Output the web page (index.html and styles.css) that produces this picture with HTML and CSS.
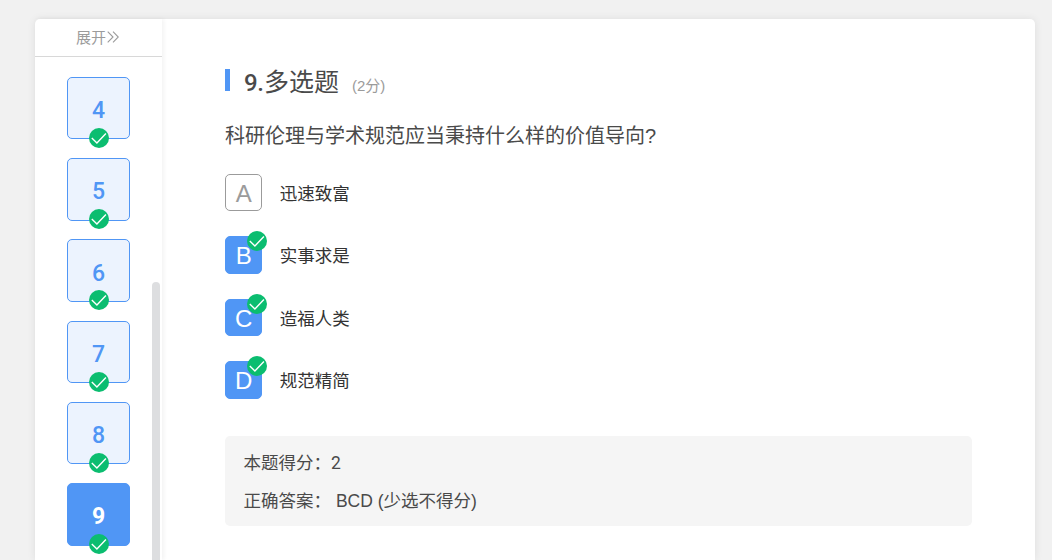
FILE: index.html
```html
<!DOCTYPE html>
<html lang="zh-CN">
  <head>
    <meta charset="UTF-8" />
    <meta name="viewport" content="width=device-width, initial-scale=1.0" />
    <title>多选题</title>
    <link rel="stylesheet" href="styles.css">
  </head>
  <body>
    <!-- Shared icons -->
    <svg class="icon-defs" width="0" height="0">
      <symbol id="check" viewBox="0 0 20 20">
        <circle cx="10" cy="10" r="10" fill="#0bbd70" />
        <path d="M2.8 10 7.9 15 16.9 5.4" fill="none" stroke="#fff" stroke-width="1.4" />
      </symbol>
    </svg>

    <div class="card">
      <aside class="sidebar">
        <div class="expand">
          <span>展开</span>
          <svg class="arrows" viewBox="0 0 12 12">
            <path d="M.7.7 6 6 .7 11.3M6 .7 11.3 6 6 11.3" />
          </svg>
        </div>
        <nav class="numbers">
          <div class="number">4<svg class="check"><use href="#check" /></svg></div>
          <div class="number">5<svg class="check"><use href="#check" /></svg></div>
          <div class="number">6<svg class="check"><use href="#check" /></svg></div>
          <div class="number">7<svg class="check"><use href="#check" /></svg></div>
          <div class="number">8<svg class="check"><use href="#check" /></svg></div>
          <div class="number active">9<svg class="check"><use href="#check" /></svg></div>
        </nav>
        <div class="scrollbar"></div>
      </aside>

      <main class="question">
        <div class="title">
          <span class="bar"></span>
          <h1><span class="din">9.</span>多选题</h1>
          <span class="score">(2分)</span>
        </div>
        <p class="stem">科研伦理与学术规范应当秉持什么样的价值导向?</p>

        <div class="options">
          <div class="option">
            <span class="letter">A</span>
            <span>迅速致富</span>
          </div>
          <div class="option selected">
            <span class="letter">B<svg class="check"><use href="#check" /></svg></span>
            <span>实事求是</span>
          </div>
          <div class="option selected">
            <span class="letter">C<svg class="check"><use href="#check" /></svg></span>
            <span>造福人类</span>
          </div>
          <div class="option selected">
            <span class="letter">D<svg class="check"><use href="#check" /></svg></span>
            <span>规范精简</span>
          </div>
        </div>

        <div class="result">
          <div>本题得分：<span class="points">2</span></div>
          <div>正确答案： <span class="answer">BCD (少选不得分)</span></div>
        </div>
      </main>
    </div>
  </body>
</html>
```
FILE: styles.css
```css
* {
  box-sizing: border-box;
}

body {
  margin: 0;
  height: 560px;
  padding: 19px 17px 0 35px;
  overflow: hidden;
  background: #f1f1f1;
  color: #4a4a4a;
  font-family: "Liberation Sans", "Noto Sans CJK SC", sans-serif;
}

.icon-defs {
  display: none;
}

.card {
  display: flex;
  height: 541px;
  background: #fff;
  border-radius: 5px 5px 0 0;
  box-shadow: 0 0 8px rgba(0, 0, 0, 0.08);
}

.sidebar {
  position: relative;
  flex: none;
  width: 127px;
  box-shadow: 2px 0 4px rgba(0, 0, 0, 0.05);
}

.expand {
  display: flex;
  align-items: center;
  justify-content: center;
  gap: 1px;
  height: 38px;
  padding: 0 2px 2px 0;
  border-bottom: 1px solid #d8d8d8;
  color: #9b9b9b;
  font-size: 15px;
}

.arrows {
  width: 12px;
  height: 12px;
  fill: none;
  stroke: #9b9b9b;
  stroke-width: 1.1;
}

.numbers {
  display: flex;
  flex-direction: column;
  gap: 18.75px;
  padding: 19.9px 32px 0;
}

.number {
  position: relative;
  display: flex;
  align-items: center;
  justify-content: center;
  flex: none;
  height: 62.5px;
  padding-top: 5px;
  background: #ecf3fe;
  border: 1px solid #5096f5;
  border-radius: 5px;
  color: #5096f5;
  font: 500 23px Roboto, sans-serif;
}

.number.active {
  background: #5096f5;
  color: #fff;
  font-weight: 700;
}

.check {
  position: absolute;
  width: 20px;
  height: 20px;
}

.number .check {
  left: 21px;
  bottom: -9.5px;
}

/* thumb of the number list */
.scrollbar {
  position: absolute;
  top: 263px;
  right: 2px;
  bottom: 0;
  width: 8px;
  background: #dddee0;
  border-radius: 4px 4px 0 0;
}

.question {
  flex: 1;
  padding: 44px 63px 0;
}

.title {
  display: flex;
  align-items: center;
  height: 38px;
}

.bar {
  width: 5px;
  height: 22px;
  margin: -4px 14px 0 0;
  background: #5096f5;
}

h1 {
  margin: 0;
  font-size: 25px;
  font-weight: 400;
  line-height: 38px;
}

.din {
  display: inline-block;
  width: 20px;
  font-family: Roboto, sans-serif;
  font-weight: 500;
  font-size: 24px;
  letter-spacing: -0.5px;
}

.score {
  margin: 5px 0 0 13px;
  color: #9b9b9b;
  font-size: 15px;
}

.stem {
  margin: 20px 0 22.6px;
  font-size: 20px;
  line-height: 30px;
}

.options {
  display: flex;
  flex-direction: column;
  gap: 25px;
}

.option {
  display: flex;
  align-items: center;
  gap: 17.5px;
  height: 37.5px;
  color: #333;
  font-size: 17.5px;
}

.letter {
  position: relative;
  display: flex;
  align-items: center;
  justify-content: center;
  width: 37.3px;
  height: 37.5px;
  padding-top: 3px;
  border: 1px solid #9b9b9b;
  border-radius: 5px;
  color: #9b9b9b;
  font-size: 24px;
  line-height: 34px;
}

.selected .letter {
  background: #5096f5;
  border-color: #5096f5;
  color: #fff;
}

.letter .check {
  top: -6px;
  right: -6px;
}

.result {
  height: 90px;
  margin-top: 37.5px;
  padding: 9px 18.5px 0;
  background: #f5f5f5;
  border-radius: 5px;
  font-size: 17.5px;
  line-height: 37.5px;
}

.points {
  font-family: Roboto, sans-serif;
}
```
